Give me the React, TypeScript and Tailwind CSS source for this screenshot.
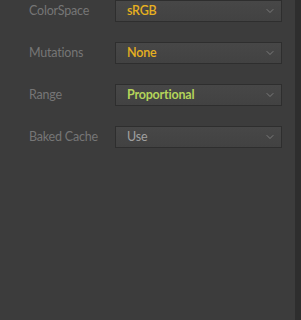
import { ChevronDown } from 'lucide-react';

const rows = [
  { label: 'ColorSpace', value: 'sRGB', color: 'text-[#e6b020] font-semibold' },
  { label: 'Mutations', value: 'None', color: 'text-[#e6b020] font-semibold' },
  { label: 'Range', value: 'Proportional', color: 'text-[#b4d45a] font-bold' },
  { label: 'Baked Cache', value: 'Use', color: 'text-[#a0a0a0]' },
];

export default function App() {
  return (
    <div className="flex h-[320px] w-[301px] bg-[#3c3c3c] font-['Lato',sans-serif]">
      <div className="flex flex-1 flex-col gap-5">
        {rows.map((r) => (
          <div key={r.label} className="flex h-[22px] items-center">
            <span className="w-[115px] shrink-0 pl-[29px] text-[12.5px] tracking-[-0.2px] whitespace-nowrap text-[#767676]">{r.label}</span>
            <div className="flex h-[22px] w-[167px] shrink-0 items-center justify-between border border-[#2e2e2e] bg-gradient-to-b from-[#474747] to-[#424242] pl-[11px] pr-[5px]">
              <span className={`text-[12.5px] tracking-[-0.2px] ${r.color}`}>{r.value}</span>
              <ChevronDown size={12} strokeWidth={1.5} className="text-[#8c8c8c]" />
            </div>
          </div>
        ))}
      </div>
      <div className="w-[6px] bg-[#2e2e2e]" />
    </div>
  );
}
